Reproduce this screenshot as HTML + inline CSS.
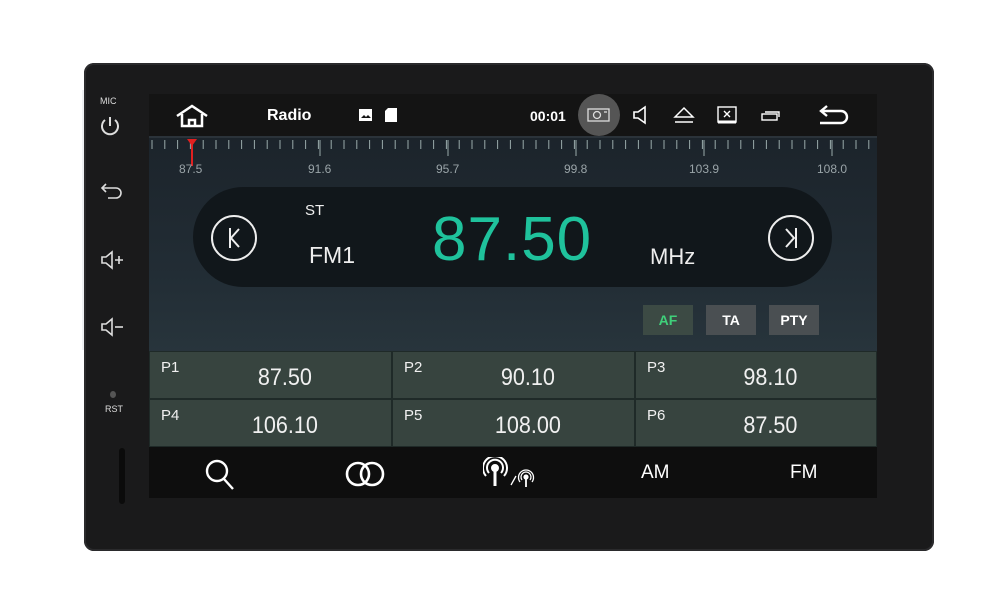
<!DOCTYPE html>
<html><head><meta charset="utf-8"><style>
*{margin:0;padding:0;box-sizing:border-box}
body{width:1000px;height:615px;background:#fff;position:relative;overflow:hidden;font-family:"Liberation Sans",sans-serif}
.a{position:absolute}
.dev{left:84px;top:63px;width:850px;height:488px;background:#1a1a1b;border-radius:10px;box-shadow:inset 0 0 0 2px #2a2a2c}
.scr{left:149px;top:94px;width:728px;height:404px;background:linear-gradient(180deg,#1a2128 0%,#222d35 45%,#2b3940 75%,#263238 100%);overflow:hidden}
.w{color:#fff}
.side{color:#ddd;font-size:9px}
.preset{background:#37443f;border:1px solid #1f2a28;color:#f0f0f0}
.preset .p{position:absolute;left:11px;top:7px;font-size:15px}
.preset .v{position:absolute;left:0;right:0;top:12px;text-align:center;font-size:24px;padding-left:32px;transform:scaleX(.9)}
.btn{top:211px;height:30px;width:50px;text-align:center;line-height:30px;font-weight:bold;font-size:14px;background:#4a4f52;color:#fff}
</style></head><body>
<div class="a" style="left:82px;top:90px;width:70px;height:260px;background:#eef0f3"></div>
<div class="a dev"></div>
<div class="a side" style="left:100px;top:96px">MIC</div>
<svg class="a" style="left:98px;top:114px" width="24" height="24" viewBox="0 0 24 24" fill="none" stroke="#ddd" stroke-width="2"><path d="M12 3v9"/><path d="M7 6a8 8 0 1 0 10 0"/></svg>
<svg class="a" style="left:100px;top:180px" width="24" height="20" viewBox="0 0 24 20" fill="none" stroke="#ddd" stroke-width="1.6"><path d="M6 4L2 8l4 4"/><path d="M2 8h14a5 5 0 0 1 0 10H8"/></svg>
<svg class="a" style="left:100px;top:250px" width="26" height="20" viewBox="0 0 26 20" fill="none" stroke="#ddd" stroke-width="1.6"><path d="M2 7h4l6-5v16l-6-5H2z"/><path d="M15 10h8M19 6v8"/></svg>
<svg class="a" style="left:100px;top:317px" width="26" height="20" viewBox="0 0 26 20" fill="none" stroke="#ddd" stroke-width="1.6"><path d="M2 7h4l6-5v16l-6-5H2z"/><path d="M15 10h8"/></svg>
<div class="a" style="left:110px;top:391px;width:6px;height:7px;border-radius:50%;background:#555"></div>
<div class="a side" style="left:105px;top:404px">RST</div>
<div class="a" style="left:119px;top:448px;width:6px;height:56px;background:#0b0b0b;border-radius:3px"></div>

<div class="a scr">
 <div class="a" style="left:0;top:0;width:728px;height:42px;background:#141414"></div>
 <svg class="a" style="left:26px;top:10px" width="34" height="24" viewBox="0 0 34 24" fill="none" stroke="#fff" stroke-width="2.5"><path d="M2 12L17 2l15 10"/><path d="M7 10v12h20V10"/><path d="M14 22v-6h6v6"/></svg>
 <div class="a w" style="left:118px;top:13px;font-size:16px;font-weight:bold">Radio</div>
 <svg class="a" style="left:209px;top:14px" width="16" height="14"><rect x="1" y="1" width="13" height="12" fill="#fff"/><path d="M3 10l3-3 2 2 2-2 3 3z" fill="#141414"/></svg>
 <svg class="a" style="left:235px;top:13px" width="14" height="16"><path d="M4 1h9v14H1V4z" fill="#fff"/></svg>
 <div class="a w" style="left:381px;top:14px;font-size:14px;font-weight:bold">00:01</div>
 <div class="a" style="left:429px;top:0;width:42px;height:42px;border-radius:21px;background:#555"></div>
 <svg class="a" style="left:438px;top:13px" width="24" height="16" fill="none" stroke="#ddd" stroke-width="1.3"><rect x="1" y="2" width="21" height="12"/><circle cx="10" cy="8" r="3.5"/><path d="M17 5h3"/></svg>
 <svg class="a" style="left:484px;top:11px" width="16" height="20" fill="none" stroke="#fff" stroke-width="1.6"><path d="M1 7h4l7-5v16l-7-5H1z"/></svg>
 <svg class="a" style="left:524px;top:12px" width="22" height="18" fill="none" stroke="#fff" stroke-width="1.5"><path d="M2 11L11 2l9 9z"/><path d="M2 16h18"/></svg>
 <svg class="a" style="left:567px;top:11px" width="22" height="20" fill="none" stroke="#fff" stroke-width="1.4"><rect x="2" y="2" width="18" height="15"/><path d="M8 6l6 6M14 6l-6 6"/><path d="M2 17h18" stroke-width="3"/></svg>
 <svg class="a" style="left:611px;top:15px" width="22" height="14" fill="none" stroke="#fff" stroke-width="1.4"><rect x="2" y="5" width="15" height="6"/><path d="M5 3h14v5"/></svg>
 <svg class="a" style="left:668px;top:9px" width="34" height="24" fill="none" stroke="#fff" stroke-width="2.4"><path d="M10 3L4 8l6 5"/><path d="M4 8h20a6 6 0 0 1 0 12H3"/></svg>
 <svg class="a" style="left:0;top:42px" width="728" height="40">
  <line x1="0" y1="1" x2="728" y2="1" stroke="#3a4248"/>
  <g stroke="#9aa" stroke-width="1">
   <path d="M3 4v9M15.8 4v9M28.6 4v9M41.4 4v9M54.2 4v9M67 4v9M79.8 4v9M92.6 4v9M105.4 4v9M118.2 4v9M131 4v9M143.8 4v9M156.6 4v9M169.4 4v9M182.2 4v9M195 4v9M207.8 4v9M220.6 4v9M233.4 4v9M246.2 4v9M259 4v9M271.8 4v9M284.6 4v9M297.4 4v9M310.2 4v9M323 4v9M335.8 4v9M348.6 4v9M361.4 4v9M374.2 4v9M387 4v9M399.8 4v9M412.6 4v9M425.4 4v9M438.2 4v9M451 4v9M463.8 4v9M476.6 4v9M489.4 4v9M502.2 4v9M515 4v9M527.8 4v9M540.6 4v9M553.4 4v9M566.2 4v9M579 4v9M591.8 4v9M604.6 4v9M617.4 4v9M630.2 4v9M643 4v9M655.8 4v9M668.6 4v9M681.4 4v9M694.2 4v9M707 4v9M719.8 4v9"/>
   <path d="M171 4v16M299 4v16M427 4v16M555 4v16M683 4v16"/>
  </g>
  <line x1="43" y1="4" x2="43" y2="30" stroke="#e02020" stroke-width="2"/>
  <path d="M38 3h10l-5 7z" fill="#e02020"/>
 </svg>
 <div class="a" style="top:68px;left:0;width:728px;font-size:12px;color:#9aa4a8">
  <span class="a" style="left:30px">87.5</span><span class="a" style="left:159px">91.6</span><span class="a" style="left:287px">95.7</span><span class="a" style="left:415px">99.8</span><span class="a" style="left:540px">103.9</span><span class="a" style="left:668px">108.0</span>
 </div>
 <div class="a" style="left:44px;top:93px;width:639px;height:100px;border-radius:50px;background:#11171b"></div>
 <svg class="a" style="left:61px;top:120px" width="48" height="48" fill="none" stroke="#eee" stroke-width="2"><circle cx="24" cy="24" r="22"/><path d="M20 14v20M29 15l-8 9 8 9"/></svg>
 <svg class="a" style="left:618px;top:120px" width="48" height="48" fill="none" stroke="#eee" stroke-width="2"><circle cx="24" cy="24" r="22"/><path d="M29 14v20M19 15l8 9-8 9"/></svg>
 <div class="a w" style="left:156px;top:108px;font-size:15px;color:#eee">ST</div>
 <div class="a w" style="left:160px;top:148px;font-size:23px;color:#eee">FM1</div>
 <div class="a" style="left:283px;top:110px;font-size:62px;color:#1fc29c;letter-spacing:1px">87.50</div>
 <div class="a w" style="left:501px;top:150px;font-size:22px;color:#eee">MHz</div>
 <div class="a btn" style="left:494px;color:#3fd07a;background:#3c4a44">AF</div>
 <div class="a btn" style="left:557px">TA</div>
 <div class="a btn" style="left:620px">PTY</div>
 <div class="a preset" style="left:0;top:257px;width:243px;height:48px"><span class="p">P1</span><span class="v">87.50</span></div>
 <div class="a preset" style="left:243px;top:257px;width:243px;height:48px"><span class="p">P2</span><span class="v">90.10</span></div>
 <div class="a preset" style="left:486px;top:257px;width:242px;height:48px"><span class="p">P3</span><span class="v">98.10</span></div>
 <div class="a preset" style="left:0;top:305px;width:243px;height:48px"><span class="p">P4</span><span class="v">106.10</span></div>
 <div class="a preset" style="left:243px;top:305px;width:243px;height:48px"><span class="p">P5</span><span class="v">108.00</span></div>
 <div class="a preset" style="left:486px;top:305px;width:242px;height:48px"><span class="p">P6</span><span class="v">87.50</span></div>
 <div class="a" style="left:0;top:353px;width:728px;height:51px;background:#0e0e0e"></div>
 <svg class="a" style="left:54px;top:364px" width="36" height="34" fill="none" stroke="#fff" stroke-width="2.4"><circle cx="14" cy="13" r="10"/><path d="M21 21l9 10"/></svg>
 <svg class="a" style="left:194px;top:366px" width="46" height="30" fill="none" stroke="#fff" stroke-width="2.6"><circle cx="15" cy="14" r="11"/><circle cx="29" cy="14" r="11"/></svg>
 <svg class="a" style="left:334px;top:363px" width="56" height="32" fill="none" stroke="#fff" stroke-width="2"><circle cx="12" cy="11" r="3" fill="#fff"/><path d="M12 12v17" stroke-width="3"/><path d="M6 16a8 8 0 1 1 12 0M3 19a12 12 0 1 1 18 0"/><path d="M28 28l5-9" stroke-width="1.3"/><circle cx="43" cy="20" r="1.6" fill="#fff"/><path d="M43 21v9" stroke-width="1.8"/><path d="M39 23a5 5 0 1 1 8 0M37 25a7.5 7.5 0 1 1 12 0" stroke-width="1.3"/></svg>
 <div class="a w" style="left:492px;top:368px;font-size:19px">AM</div>
 <div class="a w" style="left:641px;top:368px;font-size:19px">FM</div>
</div>
</body></html>
